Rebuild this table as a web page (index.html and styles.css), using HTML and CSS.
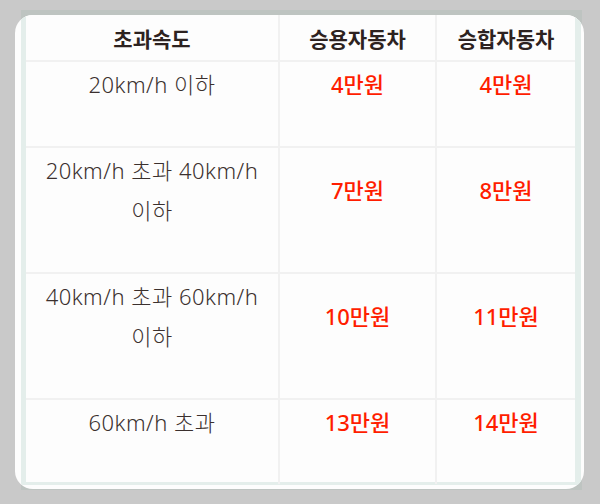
FILE: index.html
```html
<!DOCTYPE html>
<html lang="ko">
<head>
<meta charset="utf-8">
<title>과속 범칙금</title>
<link rel="stylesheet" href="styles.css">
</head>
<body>
<div class="frame">
  <div class="card">
    <div class="inner">
      <table class="fines">
        <colgroup>
          <col class="c1">
          <col class="c2">
          <col class="c3">
        </colgroup>
        <thead>
          <tr>
            <th>초과속도</th>
            <th>승용자동차</th>
            <th>승합자동차</th>
          </tr>
        </thead>
        <tbody>
          <tr>
            <td class="speed">20km/h 이하</td>
            <td class="price">4만원</td>
            <td class="price">4만원</td>
          </tr>
          <tr>
            <td class="speed">20km/h 초과 40km/h 이하</td>
            <td class="price">7만원</td>
            <td class="price">8만원</td>
          </tr>
          <tr>
            <td class="speed">40km/h 초과 60km/h 이하</td>
            <td class="price">10만원</td>
            <td class="price">11만원</td>
          </tr>
          <tr>
            <td class="speed">60km/h 초과</td>
            <td class="price">13만원</td>
            <td class="price">14만원</td>
          </tr>
        </tbody>
      </table>
    </div>
  </div>
</div>
</body>
</html>
```
FILE: styles.css
```css
html, body {
  margin: 0;
  padding: 0;
}
body {
  background: #c9c9c9;
  width: 600px;
  height: 504px;
  overflow: hidden;
  font-family: "Noto Sans", "Noto Sans CJK KR", sans-serif;
}
.frame {
  margin: 10px 0 0 21px;
  width: 561px;
  height: 480px;
  background: #bec4c1;
  padding-top: 5px;
  box-sizing: border-box;
}
.card {
  margin-left: -6px;
  width: 569px;
  height: 474px;
  background: #fdfdfd;
  border-radius: 18px;
  overflow: hidden;
  padding: 0 3px 4px 6px;
  box-sizing: border-box;
}
.inner {
  height: 100%;
  box-sizing: border-box;
  border-left: 5px solid #e4eeeb;
  border-right: 6px solid #e4eeeb;
  border-bottom: 3px solid #e4eeeb;
  border-bottom-left-radius: 3px;
  background: #fdfdfd;
}
.fines {
  width: 549px;
  border-collapse: collapse;
  table-layout: fixed;
}
.c1 { width: 253px; }
.c2 { width: 157px; }
.c3 { width: 139px; }
.fines th,
.fines td {
  border: 2px solid #f1f1f1;
  text-align: center;
  padding: 0;
  word-break: keep-all;
}
.fines thead tr th { border-top: none; }
.fines tbody tr:last-child td { border-bottom: none; }
.fines th:first-child,
.fines td:first-child { border-left: none; }
.fines th:last-child,
.fines td:last-child { border-right: none; }
.fines th {
  height: 45px;
  font-size: 21px;
  font-weight: 700;
  color: #2d2220;
  vertical-align: middle;
}
.fines td {
  padding: 2px 10px 42px;
  line-height: 40px;
  vertical-align: middle;
}
.speed {
  font-size: 22px;
  font-weight: 300;
  letter-spacing: 0.5px;
  color: #3b302e;
}
.price {
  font-size: 22px;
  font-weight: 500;
  color: #ff1d00;
}
```
